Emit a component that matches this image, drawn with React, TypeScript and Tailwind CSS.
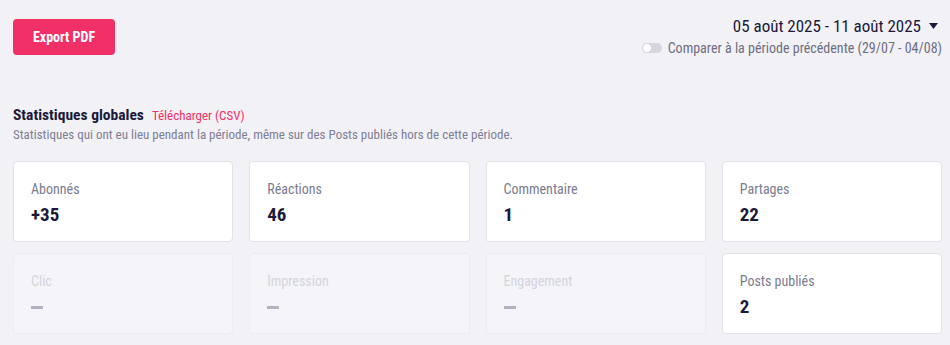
type Stat = { label: string; value: string | null };

const STATS: Stat[] = [
  { label: 'Abonnés', value: '+35' },
  { label: 'Réactions', value: '46' },
  { label: 'Commentaire', value: '1' },
  { label: 'Partages', value: '22' },
  { label: 'Clic', value: null },
  { label: 'Impression', value: null },
  { label: 'Engagement', value: null },
  { label: 'Posts publiés', value: '2' },
];

const font = { fontFamily: '"Roboto Condensed", "Liberation Sans Narrow", "DejaVu Sans Condensed", Roboto, sans-serif', fontStretch: 'condensed' } as const;

function StatCard({ stat }: { stat: Stat }) {
  const off = stat.value === null;
  return (
    <div
      className={
        'h-[81px] rounded-[4px] border px-[17px] pt-[18px] ' +
        (off ? 'border-[#ebebf0] bg-[#f5f5f9]' : 'border-[#e1e1e8] bg-white')
      }
    >
      <p className={'text-[14px] leading-[18px] ' + (off ? 'text-[#d3d3dc]' : 'text-[#7b7b8e]')}>{stat.label}</p>
      {off ? (
        <div className="mt-[16px] h-[3px] w-[12px] bg-[#b3b3bf]" />
      ) : (
        <p className="mt-[6px] text-[19px] font-bold leading-[22px] text-[#1b1a3a]">{stat.value}</p>
      )}
    </div>
  );
}

export default function App() {
  return (
    <div className="h-[345px] w-[950px] overflow-hidden bg-[#f1f1f6]" style={font}>
      <div className="pl-[13px] pr-[8px]">
        {/* Header */}
        <div className="flex items-start justify-between pt-[15px]">
          <button className="mt-[4px] h-[36px] w-[102px] rounded-[4px] bg-[#f23068] text-[14px] font-bold text-white">
            Export PDF
          </button>
          <div className="flex flex-col items-end">
            <div className="flex items-center gap-[8px] pr-[4px] text-[17px] leading-[22px] text-[#1b1a3a]">
              <span>05 août 2025 - 11 août 2025</span>
              <svg width="9" height="6" viewBox="0 0 9 6"><path d="M0 0h9L4.5 6z" fill="#1b1a3a" /></svg>
            </div>
            <div className="mt-[3px] flex items-center gap-[6px]">
              <span className="relative inline-block h-[10px] w-[20px] rounded-full bg-[#d6d6de]">
                <span className="absolute left-0 top-0 h-[10px] w-[10px] rounded-full border border-[#d6d6de] bg-white" />
              </span>
              <span className="text-[14px] leading-[16px] text-[#6e6e82]">
                Comparer à la période précédente (29/07 - 04/08)
              </span>
            </div>
          </div>
        </div>

        {/* Section title */}
        <div className="mt-[49px] flex items-baseline gap-[8px]">
          <h2 className="text-[15.5px] font-bold leading-[20px] text-[#1b1a3a]">Statistiques globales</h2>
          <a className="text-[13px] text-[#f23068]">Télécharger (CSV)</a>
        </div>
        <p className="text-[13px] leading-[17px] text-[#7e7e94]">
          Statistiques qui ont eu lieu pendant la période, même sur des Posts publiés hors de cette période.
        </p>

        {/* Cards */}
        <div className="mt-[18px] grid grid-cols-4 gap-x-[16px] gap-y-[11px]">
          {STATS.map((s) => (
            <StatCard key={s.label} stat={s} />
          ))}
        </div>
      </div>
    </div>
  );
}
